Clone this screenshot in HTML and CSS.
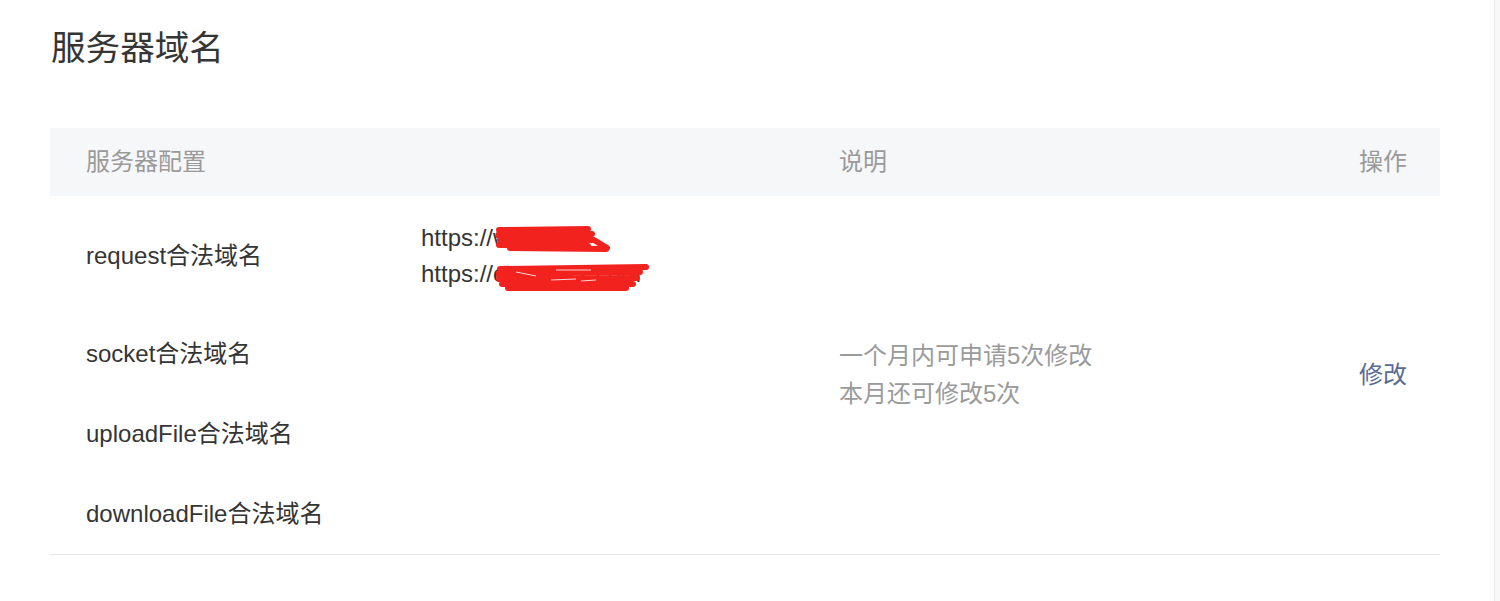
FILE: index.html
```html
<!DOCTYPE html>
<html lang="zh-CN">
<head>
<meta charset="utf-8">
<title>服务器域名</title>
<link rel="stylesheet" href="styles.css">
</head>
<body>
<div class="app">
  <main class="main">
    <h1 class="title">服务器域名</h1>
    <div class="table">
      <div class="thead">
        <div class="th">服务器配置</div>
        <div class="th"></div>
        <div class="th">说明</div>
        <div class="th th-op">操作</div>
      </div>
      <div class="tbody">
        <div class="label r1">request合法域名</div>
        <div class="urls r1">
          <div class="url">https://wjxxx.cn</div>
          <div class="url">https://ccxxxxxx.com</div>
          <svg class="redact" width="160" height="72" viewBox="0 0 160 72" aria-hidden="true">
            <g fill="none" stroke="#f2231f" stroke-width="6" stroke-linecap="round" stroke-linejoin="round">
              <path d="M3 6 L92 5"/>
              <path d="M2 11 L96 10"/>
              <path d="M4 16 L98 16 L111 24"/>
              <path d="M3 21 L92 22"/>
              <path d="M14 24 L110 25"/>
              <path d="M4 45 L150 43"/>
              <path d="M2 50 L144 48"/>
              <path d="M3 55 L141 54"/>
              <path d="M6 60 L137 60"/>
              <path d="M12 64 L130 64"/>
            </g>
            <g stroke="#ffffff" stroke-width="1" opacity="0.8">
              <path d="M20 48 L40 52"/>
              <path d="M60 46 L95 46"/>
              <path d="M55 56 L80 55"/>
              <path d="M85 57 L100 56"/>
            </g>
          </svg>
        </div>
        <div class="label r2">socket合法域名</div>
        <div class="label r3">uploadFile合法域名</div>
        <div class="label r4">downloadFile合法域名</div>
        <div class="desc">
          <div>一个月内可申请5次修改</div>
          <div>本月还可修改5次</div>
        </div>
        <div class="op"><a class="link" href="#">修改</a></div>
      </div>
    </div>
  </main>
  <div class="gutter"></div>
</div>
</body>
</html>
```

FILE: styles.css
```css
html, body {
  margin: 0;
  padding: 0;
  background: #ffffff;
}
body {
  font-family: "Liberation Sans", "Noto Sans CJK SC", sans-serif;
  color: #353535;
}
.app {
  display: flex;
  min-height: 601px;
}
.main {
  flex: 1;
  padding: 0 54px 0 50px;
}
.gutter {
  width: 5px;
  border-left: 1px solid #ececec;
  background: #f8f8f8;
}
.title {
  margin: 0 0 62px 1px;
  padding-top: 31px;
  font-size: 34.6px;
  line-height: 35px;
  font-weight: normal;
  color: #353535;
  letter-spacing: 0;
}
.table {
  width: 100%;
}
.thead,
.tbody {
  display: grid;
  grid-template-columns: 335px 418px 1fr auto;
  padding: 0 33px 0 36px;
}
.thead {
  height: 68px;
  align-items: center;
  background: #f6f7f9;
}
.th {
  font-size: 24px;
  line-height: 30px;
  color: #9a9a9a;
}
.th-op {
  text-align: right;
}
.tbody {
  grid-template-rows: 118px 80px 80px 80px;
  border-bottom: 1px solid #e7e7e7;
}
.label {
  grid-column: 1;
  align-self: center;
  font-size: 24px;
  line-height: 36px;
  color: #353535;
}
.r1 { grid-row: 1; padding-top: 2px; }
.r2 { grid-row: 2; }
.r3 { grid-row: 3; }
.r4 { grid-row: 4; }
.urls {
  grid-column: 2;
  align-self: center;
  position: relative;
  font-size: 24px;
  line-height: 36px;
  color: #353535;
  padding-top: 2px;
}
.redact {
  position: absolute;
  left: 75px;
  top: 6px;
}
.desc {
  grid-column: 3;
  grid-row: 1 / 5;
  align-self: center;
  font-size: 24px;
  line-height: 38px;
  color: #9a9a9a;
}
.op {
  grid-column: 4;
  grid-row: 1 / 5;
  align-self: center;
  text-align: right;
  font-size: 24px;
  line-height: 38px;
}
.link {
  color: #576b95;
  text-decoration: none;
}
```
